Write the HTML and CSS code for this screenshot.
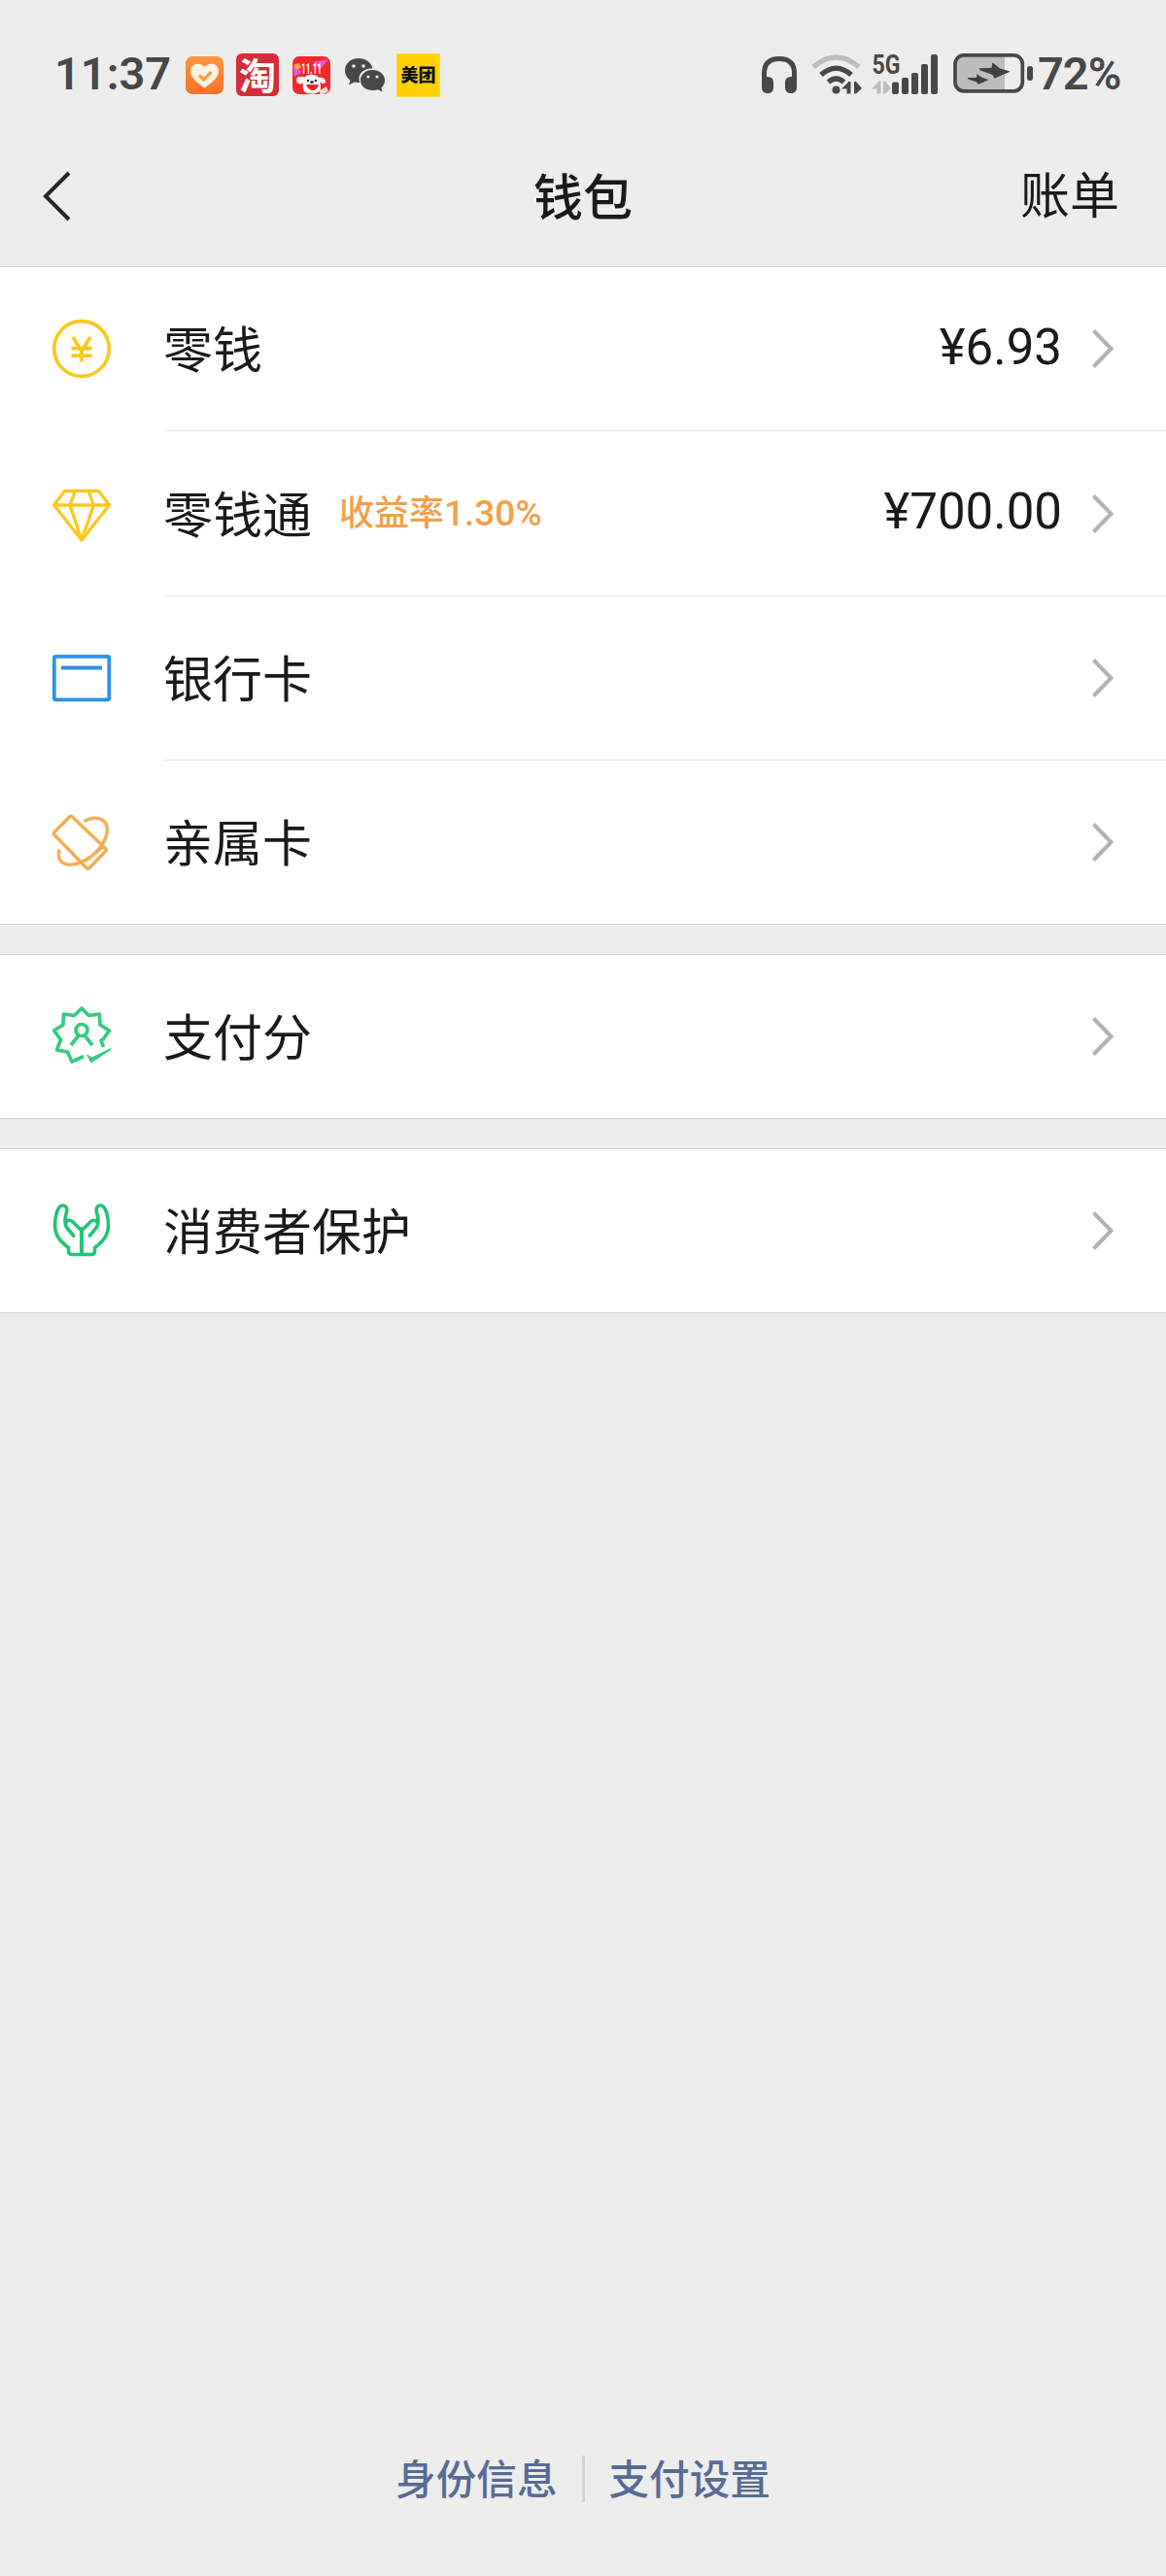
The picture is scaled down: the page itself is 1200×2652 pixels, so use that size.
FILE: index.html
```html
<!DOCTYPE html>
<html lang="zh-CN">
<head>
<meta charset="utf-8">
<title>钱包</title>
<link rel="stylesheet" href="styles.css">
</head>
<body>
<div class="screen">
  <div class="status">
    <span class="clock">11:37</span>
    <svg class="apps" width="264" height="66" viewBox="190 44 264 66">
      <defs>
        <linearGradient id="orange" x1="0" y1="0" x2="0" y2="1"><stop offset="0" stop-color="#fd963b"/><stop offset="1" stop-color="#fb712b"/></linearGradient>
      </defs>
      <rect x="191" y="58" width="39" height="39" rx="7" fill="url(#orange)"/>
      <path d="M210.500 90.500C205 87 196 80 196 73.500C196 65 205.500 63.500 210.500 69C215.500 63.500 225 65 225 73.500C225 80 216 87 210.500 90.500Z" fill="#fff3e2"/>
      <path d="M205 77.500L209.500 82L217.500 74" fill="none" stroke="#f6a04c" stroke-width="3.200"/>
      <rect x="243" y="55" width="44" height="44" rx="6" fill="#d42f38"/>
      <text class="tao" x="265" y="91.500" text-anchor="middle">淘</text>
      <rect x="301" y="58" width="39" height="39" rx="7" fill="#f4282a"/>
      <path d="M301 66L311 74L303 79ZM322 64L338 61L329 72Z" fill="#e05ad0"/>
      <path d="M303 66L308 65L310 70L304 72Z" fill="#f9a13a"/>
      <text class="sale" x="310" y="75.500" textLength="21" lengthAdjust="spacingAndGlyphs">11.11</text>
      <path d="M305 82C306 77 311 80 314 79C318 76 325 76 328 80C332 79 336 82 335 85C333 87 330 85 329 84C332 92 329 96 322 96.500C314 97 310 93 312 85C309 88 305 86 305 82Z" fill="#fff"/>
      <circle cx="317" cy="83" r="1.300" fill="#333"/><circle cx="325" cy="83" r="1.300" fill="#333"/><ellipse cx="321" cy="84.500" rx="2" ry="1.200" fill="#222"/>
      <path d="M315 87H328C326 95 318 95 315 87Z" fill="#e52a2a"/>
      <path d="M329 93L336 89L338 94L333 97H329Z" fill="#fbd4cf"/>
      <path d="M369 60C361 60 355 65.500 355 72.500C355 77 357.500 80.500 360.500 82.500L359 87.500L365 84.500C367 85 369 85.200 370.500 85C367 76 375 70 383.500 70.500C382 64 376 60 369 60Z" fill="#484848"/>
      <path d="M383.500 72C376 72 371 77 371 82.500C371 89 377 93 383.500 93C385.500 93 387.500 92.700 389 92.200L393.500 94.500L392.500 90.500C394.500 88.500 396 86 396 82.500C396 77 390.500 72 383.500 72Z" fill="#484848"/>
      <g fill="#ececec"><circle cx="364" cy="68" r="1.800"/><circle cx="374" cy="68" r="1.800"/><circle cx="379" cy="79" r="1.600"/><circle cx="388" cy="79" r="1.600"/></g>
      <rect x="408.500" y="55.500" width="44" height="44" fill="#ffd100" stroke="#fbd84c"/>
      <text class="meituan" x="430.500" y="84" text-anchor="middle">美团</text>
    </svg>
    <svg class="system" width="282" height="66" viewBox="782 44 282 66" fill="#484848">
      <path d="M786.500 88V75.500C786.500 64 793 60.500 802 60.500C811 60.500 817.500 64 817.500 75.500V88" fill="none" stroke="#484848" stroke-width="5"/>
      <rect x="784" y="79" width="12" height="17" rx="5.500"/><rect x="808" y="79" width="12" height="17" rx="5.500"/>
      <g fill="none" stroke="#484848" stroke-width="5.500">
        <path d="M837 69Q860.500 49 884 69" stroke="#bdbdbd"/>
        <path d="M845 77Q860.500 63.500 876 77"/>
        <path d="M852.500 84.500Q860.500 77.500 868.500 84.500"/>
      </g>
      <circle cx="860.500" cy="92.500" r="4"/>
      <path d="M866 91.500L873.500 84H875.500V96.500H871.500V91.500ZM879 84H881L887 91L881 96.500H879Z"/>
      <text class="net" x="897.500" y="76.200" textLength="29" lengthAdjust="spacingAndGlyphs">5G</text>
      <path d="M897 91.500L904.500 83.500H906.500V96.500H902.500V91.500ZM909 83.500H911L917 91L911 96.500H909Z" fill="#bdbdbd"/>
      <rect x="918" y="84.500" width="7" height="12.500" rx="2"/><rect x="928" y="80" width="7" height="17" rx="2"/><rect x="938" y="75" width="7" height="22" rx="2"/><rect x="948" y="66" width="7" height="31" rx="2"/><rect x="958" y="56" width="7" height="41" rx="2"/>
      <path d="M992 57H1034V94H992Q983 94 983 85V66Q983 57 992 57Z" fill="#bdbdbd"/>
      <rect x="983" y="56.800" width="69.300" height="37" rx="9" fill="none" stroke="#484848" stroke-width="3.700"/>
      <rect x="1057" y="68" width="6" height="15" rx="2.500"/>
      <path d="M1021.500 64.300L1029 70.500L1039.800 73.500L1023.500 80.700L1021.500 77L1008 72V70.300L1020.500 70ZM1005.500 76L1010 79.500L1017.500 82.300L1007 86.800L1005 84.500L996 81.300V80H1005Z" fill="#404040"/>
    </svg>
    <span class="percent">72%</span>
  </div>

  <div class="navbar">
    <svg class="back" width="32" height="52" viewBox="0 0 32 52"><path d="M28 2L4 26L28 50" fill="none" stroke="#262626" stroke-width="4"/></svg>
    <h1 class="title">钱包</h1>
    <span class="bill">账单</span>
  </div>

  <div class="group">
    <div class="row">
      <svg class="icon" viewBox="0 0 64 64" fill="none" stroke="#fac81e" stroke-width="3.700"><circle cx="32" cy="32" r="28.300"/><path d="M23 20L32 34.500L41 20M32 33V45.500M21.500 31.700H42.500M21.500 39.200H42.500"/></svg>
      <div class="cell"><span class="label">零钱</span><span class="amount">¥6.93</span><svg class="arrow" viewBox="0 0 24 40"><path d="M2.500 1.500L20.500 20L2.500 38.500"/></svg></div>
    </div>
    <div class="row tall">
      <svg class="icon" viewBox="0 0 64 64" fill="none" stroke="#fac81e" stroke-width="3.300" stroke-linejoin="round"><path d="M14.500 9.500H49.500L60.500 24L32 60L3.500 24ZM3.500 24H60.500M25.500 9.500L20 24L32 60L44.500 24L39 9.500"/></svg>
      <div class="cell"><span class="label">零钱通</span><span class="rate">收益率<span class="rate-value">1.30%</span></span><span class="amount">¥700.00</span><svg class="arrow" viewBox="0 0 24 40"><path d="M2.500 1.500L20.500 20L2.500 38.500"/></svg></div>
    </div>
    <div class="row">
      <svg class="icon" viewBox="0 0 64 64" fill="none" stroke="#2e92e6" stroke-width="3.800"><rect x="3.800" y="9.800" width="56.500" height="44.500" rx="1.500"/><path d="M11 21.500H53"/></svg>
      <div class="cell"><span class="label">银行卡</span><svg class="arrow" viewBox="0 0 24 40"><path d="M2.500 1.500L20.500 20L2.500 38.500"/></svg></div>
    </div>
    <div class="row">
      <svg class="icon" viewBox="0 0 64 64" fill="none" stroke="#f3ae55" stroke-width="3.500" stroke-linejoin="round"><path d="M19.500 6Q21 4.500 22.500 6L56.500 38.500Q58 40 56.500 41.500L40 58.500Q38.500 60 37 58.500L4 24.500Q2.500 23 4 21.500ZM34.500 10.500C41 6.500 49 6 54 9.500C60 14 60 24 52.500 35.500C45 46.500 31 55.500 19.500 55.300C10 54.500 7 49 9 39.500M36 51.500L54.500 36.500"/></svg>
      <div class="cell"><span class="label">亲属卡</span><svg class="arrow" viewBox="0 0 24 40"><path d="M2.500 1.500L20.500 20L2.500 38.500"/></svg></div>
    </div>
  </div>

  <div class="group">
    <div class="row">
      <svg class="icon" viewBox="0 -1.500 64 64" fill="none" stroke="#34cb83" stroke-width="3.700" stroke-linejoin="round"><path d="M54.500 41.500L52 34.500L54.500 33L60.500 24.500L51 18.500L50.500 7.500L39.500 9L32 1.500L24.500 9L13.500 7.500L13 18.500L3.500 24.500L10.500 34L6.500 44.500L17.500 46.500L22 56.500L34 51"/><circle cx="32" cy="24" r="6"/><path d="M28.500 30L21 39.500M35.500 30L43 39.500"/><path d="M37 48.500L42.500 52L62 42.500V44.500L41.500 58Z" fill="#34cb83" stroke="none"/></svg>
      <div class="cell"><span class="label">支付分</span><svg class="arrow" viewBox="0 0 24 40"><path d="M2.500 1.500L20.500 20L2.500 38.500"/></svg></div>
    </div>
  </div>

  <div class="group">
    <div class="row">
      <svg class="icon" viewBox="0 0 64 64" fill="none" stroke="#22c474" stroke-width="3.600" stroke-linejoin="round" stroke-linecap="round"><path d="M32 30V56.500H22Q18.500 56.500 18.500 53V49.500C13 45 4.500 39 4.500 27C4.500 18 7 6 12.500 6C16 6 17.500 9 16.500 13C15 18 14.500 25 16.500 28.500L23.500 37M15.500 25C16 20.500 20 20.500 22.500 22.500L32 32"/><path d="M32 30V56.500H42Q45.500 56.500 45.500 53V49.500C51 45 59.500 39 59.500 27C59.500 18 57 6 51.500 6C48 6 46.500 9 47.500 13C49 18 49.500 25 47.500 28.500L40.500 37M48.500 25C48 20.500 44 20.500 41.500 22.500L32 32"/></svg>
      <div class="cell"><span class="label">消费者保护</span><svg class="arrow" viewBox="0 0 24 40"><path d="M2.500 1.500L20.500 20L2.500 38.500"/></svg></div>
    </div>
  </div>

  <div class="footer"><span>身份信息</span><i class="divider"></i><span>支付设置</span></div>
</div>
</body>
</html>
```
FILE: styles.css
```css
* { box-sizing: border-box; }
body {
  margin: 0;
  background: #ededed;
  color: #1a1a1a;
  font-family: "Noto Sans CJK SC", sans-serif;
}
.screen {
  display: flex;
  flex-direction: column;
  height: 2652px;
}
.status {
  display: flex;
  align-items: center;
  height: 154px;
  padding-left: 56px;
  color: #484848;
  flex: none;
}
.clock, .percent {
  font: 600 47px/56px "Roboto", sans-serif;
  white-space: nowrap;
  padding-bottom: 2px;
}
.clock { width: 134px; }
.apps { flex: none; }
.system { margin-left: 328px; flex: none; }
.percent { margin-left: 4px; letter-spacing: -1px; }
.tao { font: 700 38px "Noto Sans CJK SC", sans-serif; fill: #fff; }
.sale { font: 700 15px "Roboto", sans-serif; fill: #fff; }
.meituan { font: 900 18px "Noto Sans CJK SC", sans-serif; fill: #111; }
.net { font: 700 27px "Roboto", sans-serif; }
.navbar {
  display: grid;
  grid-template-columns: 1fr auto 1fr;
  align-items: center;
  height: 120px;
  padding: 0 48px 24px;
  flex: none;
}
.back { margin-left: -5px; }
.title { margin: 0; padding-bottom: 5px; font-size: 51px; font-weight: 500; line-height: 60px; }
.bill { justify-self: end; padding-bottom: 8px; font-size: 51px; line-height: 60px; }
.group {
  background: #fff;
  border-top: 1px solid #d5d5d5;
  border-bottom: 1px solid #d5d5d5;
  margin-bottom: 30px;
  flex: none;
}
.row { display: flex; align-items: center; height: 168px; }
.row + .row { height: 169px; }
.row + .row.tall { height: 170px; }
.icon { width: 64px; height: 64px; margin: 0 52px; flex: none; }
.cell {
  display: flex;
  align-items: center;
  height: 100%;
  flex: 1;
  padding-right: 53px;
}
.row + .row .cell { border-top: 1px solid #e5e5e5; }
.label { padding-bottom: 4px; font-size: 51px; line-height: 60px; }
.rate { margin-left: 28px; padding-bottom: 3px; color: #f2a04b; font-size: 36px; font-weight: 500; line-height: 44px; }
.rate-value { font-family: "Roboto", sans-serif; font-size: 37px; }
.amount { margin-left: auto; padding-bottom: 3px; font: 400 51px/60px "Roboto", sans-serif; }
.arrow { width: 24px; height: 40px; margin-left: auto; fill: none; stroke: #b2b2b2; stroke-width: 4; }
.amount + .arrow { margin-left: 30px; }
.footer {
  display: flex;
  justify-content: center;
  align-items: center;
  gap: 25px;
  margin-top: auto;
  margin-bottom: 69px;
  color: #576b95;
  font-size: 41.6px;
  font-weight: 500;
  line-height: 60px;
}
.footer span { padding-bottom: 3px; }
.divider { width: 3px; height: 48px; background: #d4d4d4; }
```
